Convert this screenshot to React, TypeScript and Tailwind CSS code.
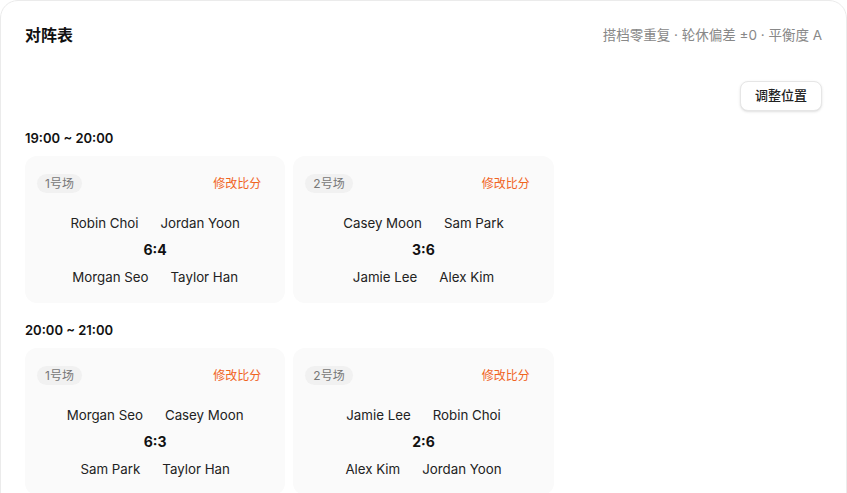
const font = "font-['Inter','Noto_Sans_CJK_SC',sans-serif]"

interface Match {
  court: string
  top: [string, string]
  bottom: [string, string]
  score: string
}

const rounds: { time: string; matches: Match[] }[] = [
  {
    time: '19:00 ~ 20:00',
    matches: [
      { court: '1号场', top: ['Robin Choi', 'Jordan Yoon'], bottom: ['Morgan Seo', 'Taylor Han'], score: '6:4' },
      { court: '2号场', top: ['Casey Moon', 'Sam Park'], bottom: ['Jamie Lee', 'Alex Kim'], score: '3:6' },
    ],
  },
  {
    time: '20:00 ~ 21:00',
    matches: [
      { court: '1号场', top: ['Morgan Seo', 'Casey Moon'], bottom: ['Sam Park', 'Taylor Han'], score: '6:3' },
      { court: '2号场', top: ['Jamie Lee', 'Robin Choi'], bottom: ['Alex Kim', 'Jordan Yoon'], score: '2:6' },
    ],
  },
]

const MatchCard = ({ match }: { match: Match }) => {
  return (
    <div className="flex flex-col rounded-xl bg-[#fafafa] px-3 pt-[18px] pb-4">
      <div className="flex items-center justify-between">
        <span className="rounded-full bg-[#f1f1f1] px-2 text-[12px] leading-[19px] text-[#777]">{match.court}</span>
        <button className="px-3 text-[12px] leading-[19px] text-[#f0641e]">修改比分</button>
      </div>
      <div className="mt-5 flex flex-col items-center gap-[7px] text-[13.3px] leading-[20px] text-[#222]">
        <div className="flex gap-[22px]">
          <span>{match.top[0]}</span>
          <span>{match.top[1]}</span>
        </div>
        <div className="text-[14px] font-bold text-[#111]">{match.score}</div>
        <div className="flex gap-[22px]">
          <span>{match.bottom[0]}</span>
          <span>{match.bottom[1]}</span>
        </div>
      </div>
    </div>
  )
}

export default function App() {
  return (
    <div className={`min-h-screen bg-white ${font}`}>
      <div className="rounded-[18px] border border-[#ebebeb] bg-white px-6 pt-[23px] pb-8">
        <div className="flex items-center justify-between">
          <h2 className="text-[16px] leading-[22px] font-semibold text-[#111]">对阵表</h2>
          <span className="text-[13.5px] leading-[20px] text-[#888]">搭档零重复 · 轮休偏差 ±0 · 平衡度 A</span>
        </div>
        <div className="mt-[35px] flex justify-end">
          <button className="h-[30px] rounded-lg border border-[#e6e6e6] bg-white px-[14px] text-[13px] font-medium text-[#222] shadow-sm">
            调整位置
          </button>
        </div>
        <div className="mt-[18px] flex flex-col gap-[18px]">
          {rounds.map((round) => (
            <section key={round.time}>
              <h3 className="mb-[9px] text-[13px] leading-[18px] font-semibold text-[#111]">{round.time}</h3>
              <div className="grid grid-cols-3 gap-2">
                {round.matches.map((m) => (
                  <MatchCard key={m.court} match={m} />
                ))}
              </div>
            </section>
          ))}
        </div>
      </div>
    </div>
  )
}
